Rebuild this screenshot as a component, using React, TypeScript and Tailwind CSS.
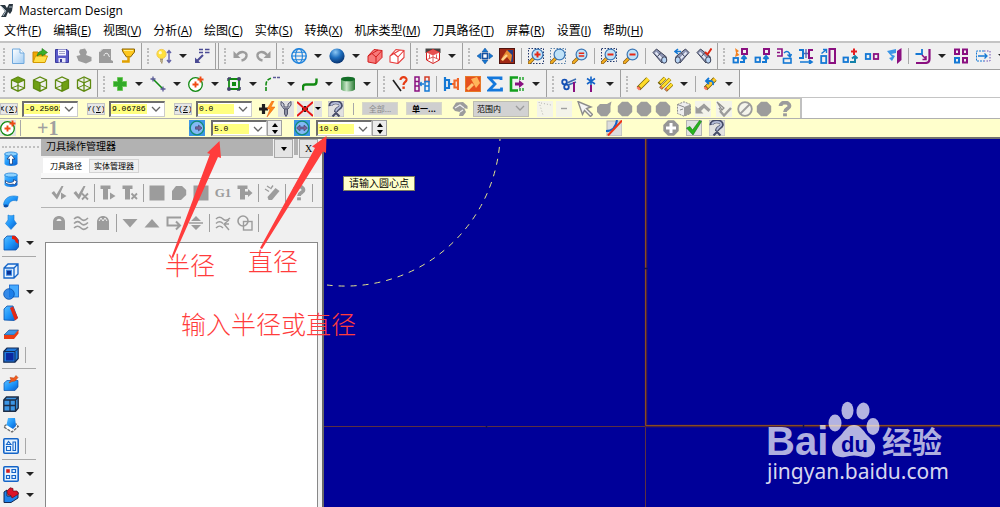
import { useState } from "react";
import type { ReactNode } from "react";

const BLUE = "#1478d4";
const PURPLE = "#8a1080";
const GRAY = "#9c9c9c";
const GREEN = "#128a12";

const lens = (
  <>
    <path d="M6 10 L1.5 14.5" stroke="#8a5a10" strokeWidth="3.4" strokeLinecap="round" />
    <path d="M6 10 L1.5 14.5" stroke="#f5b020" strokeWidth="2" strokeLinecap="round" />
    <circle cx="9.5" cy="6.5" r="5.4" fill="#bfe2f8" stroke="#3b76b4" strokeWidth="1.2" />
  </>
);

const torch = (
  <>
    <path d="M1 4.5 L4.5 1 L14.5 9 L10 15 Z" fill="#8e96b4" stroke="#3a3f55" />
    <path d="M3.5 4.5 L10.5 11.5" stroke="#e6eaf6" strokeWidth="2" />
    <path d="M5.5 8.5 L8.5 5" stroke="#3a3f55" />
    <ellipse cx="12.2" cy="12" rx="2.6" ry="3.2" fill="#b9d6f6" stroke="#3a3f55" />
  </>
);

const box = (
  <path d="M1.5 4 L8 1 L14.5 4 V12 L8 15.2 L1.5 12 Z M1.5 4 L8 6.8 L14.5 4 M8 6.8 V15" fill="none" stroke="#5f8a10" strokeWidth="1.3" />
);

const icons: Record<string, ReactNode> = {
  newFile: (
    <>
      <path d="M2.5 1 H10 L14 5 V15.5 H2.5 Z" fill="url(#page)" stroke="#6fa8dc" />
      <path d="M10 1 V5 H14" fill="#fff" stroke="#6fa8dc" />
    </>
  ),
  open: (
    <>
      <path d="M1 4 H6 L7 6 H13 V14 H1 Z" fill="#f0a800" stroke="#c98400" />
      <path d="M3.5 8 H15.5 L13 14.5 H1 Z" fill="#ffe04a" stroke="#d49a00" />
      <path d="M5 8 C6 4 8 3 10 3 V0.5 L15.5 4.5 L10 8 V6 C8 6 7 7 5 8Z" fill="#3ab02a" stroke="#1c7a18" strokeWidth=".6" />
    </>
  ),
  save: (
    <>
      <path d="M1.5 1.5 H13 L14.5 3 V14.5 H1.5 Z" fill="#5a5ac8" stroke="#3a3a9c" />
      <rect x="4" y="1.5" width="8" height="6" fill="#f4f4ff" />
      <path d="M5 3.5 H11 M5 5.5 H11" stroke="#a0a0c8" />
      <rect x="4.5" y="10" width="7" height="4.5" fill="#e8e8f8" />
      <rect x="6" y="11" width="2" height="3" fill="#3a3a9c" />
    </>
  ),
  printGray: (
    <path d="M4 1.5 L9 0.5 L11 4 L10 7 L15.5 9 V13 L10 15.5 L2.5 13 L0.5 8 L4.5 7 L3 4 Z" fill={GRAY} />
  ),
  docGray: (
    <>
      <path d="M4 1 H13 V12 L15 13 V15 H1 V4 Z" fill={GRAY} />
      <path d="M6 8 C6 4.5 10 4.5 10.5 7 L11.5 9" fill="none" stroke="#eee" />
      <path d="M1.5 4 L4.5 1" stroke="#f0f0f0" />
    </>
  ),
  funnel: (
    <>
      <path d="M2 1 H14.5 V4 L10.5 9 H6.5 L3 4 Z" fill="#ffc81e" stroke="#8a6200" />
      <path d="M4 2.5 H13" stroke="#fff08a" />
      <path d="M8.5 9 V13.5 H2" fill="none" stroke="#e0a000" strokeWidth="2.5" />
    </>
  ),
  bulb: (
    <>
      <circle cx="5.5" cy="6" r="4.6" fill="#ffe13c" stroke="#f0c850" />
      <circle cx="4.3" cy="4.7" r="1.6" fill="#fffad0" />
      <path d="M4 11.4 H7 M4 13 H7 M5 14.8 H6.5" stroke="#a8966e" strokeWidth="1.4" />
      <path d="M13 3 V14 M11 5 L13 2.5 L15 5 M11 12 L13 14.5 L15 12" fill="none" stroke="#6464a8" strokeWidth="1.4" />
    </>
  ),
  attribs: (
    <>
      <path d="M5 1.5 H9 M11 1.5 H15.5 M5 4.5 H9 M11 4.5 H15.5" stroke="#4a4a94" strokeWidth="1.6" />
      <path d="M9 7 L3 13" stroke="#4a4a94" strokeWidth="2" />
      <path d="M1 9.5 V15 H6.5 Z" fill="#4a4a94" />
    </>
  ),
  undo: (
    <>
      <path d="M4 7 C8 2 14 4 13.5 8 C13 11 11 12 8.5 12.5" fill="none" stroke={GRAY} strokeWidth="2.4" />
      <path d="M0.5 3 V10 H7.5 Z" fill={GRAY} />
    </>
  ),
  redo: (
    <>
      <path d="M12 7 C8 2 2 4 2.5 8 C3 11 5 12 7.5 12.5" fill="none" stroke={GRAY} strokeWidth="2.4" />
      <path d="M15.5 3 V10 H8.5 Z" fill={GRAY} />
    </>
  ),
  globe: (
    <g fill="none" stroke="#1e82dc" strokeWidth="1.1">
      <circle cx="8" cy="8" r="7.2" strokeWidth="1.5" />
      <ellipse cx="8" cy="8" rx="3.4" ry="7.2" />
      <path d="M0.8 8 H15.2 M2 4.3 H14 M2 11.7 H14" />
    </g>
  ),
  sphere: <circle cx="8" cy="8" r="7.6" fill="url(#ball)" />,
  cubeRed: (
    <>
      <path d="M1 8 L7 1.5 L15 2.5 V9.5 L9 15.5 L1 14 Z" fill="#f77a7a" stroke="#d21e1e" />
      <path d="M1 8 L5 5.5 L9 9 V15.5 M9 9 L15 2.5 M5 5.5 L11 2" fill="none" stroke="#d21e1e" />
    </>
  ),
  cubeWire: (
    <path d="M1 8 L7 1.5 L15 2.5 V9.5 L9 15.5 L1 14 Z M1 8 L5 5.5 L9 9 V15.5 M9 9 L15 2.5 M5 5.5 L11 2" fill="#fff" stroke="#e63c3c" strokeWidth="1.1" />
  ),
  cubeView: (
    <>
      <path d="M0.5 0.5 H15.5 V5 H0.5 Z" fill="#444" />
      <path d="M1.5 4.5 L8 1.5 L14.5 4.5 V12 L8 15.5 L1.5 12 Z" fill="#fff" stroke="#d21e1e" />
      <path d="M1.5 4.5 L8 1.5 L14.5 4.5 L8 7.5 Z" fill="#e65050" />
      <path d="M8 7.5 V15 M4.5 6.5 V10 M11.5 6.5 V10 M2 11.5 L8 9 L14 11.5" fill="none" stroke="#e05a5a" />
    </>
  ),
  fit: (
    <>
      <rect x="5.5" y="5.5" width="5" height="5" fill="#fff" stroke="#1450a0" strokeWidth="1.6" />
      <path d="M8 0 L11 4 H5 Z M8 16 L11 12 H5 Z M0 8 L4 5 V11 Z M16 8 L12 5 V11 Z" fill="#1478d4" stroke="#104a90" strokeWidth=".5" />
    </>
  ),
  repaint: (
    <>
      <rect x="0.5" y="0.5" width="15" height="15" fill="#a02814" stroke="#501410" />
      <path d="M8 2 H14 V14 H12 Z" fill="#283c82" />
      <path d="M4 8 L8 2 L13 7 L12 14 L8 9 L4 13 L2 12 Z" fill="#e88a32" />
      <path d="M3 12 L8 7" stroke="#ffd28c" strokeWidth="2.4" />
    </>
  ),
  zoomWindow: (
    <>
      <rect x="0.5" y="0.5" width="15" height="15" fill="none" stroke="#20366c" strokeDasharray="1.5 1.5" />
      {lens}
      <path d="M9.5 3.5 V9.5 M6.5 6.5 H12.5" stroke="#e62814" strokeWidth="2" />
    </>
  ),
  zoomTarget: (
    <>
      <rect x="0.5" y="0.5" width="15" height="15" fill="none" stroke="#5a82aa" strokeDasharray="1.5 1.5" />
      {lens}
    </>
  ),
  unzoomPrev: (
    <>
      {lens}
      <path d="M6.8 5.3 H12.2 M6.8 8 H12.2" stroke="#e62814" strokeWidth="1.6" />
    </>
  ),
  unzoomHalf: (
    <>
      <rect x="0.5" y="0.5" width="15" height="13" fill="none" stroke="#20366c" strokeDasharray="1.5 1.5" />
      {lens}
      <path d="M6.5 6.5 H12.5" stroke="#e62814" strokeWidth="2" />
    </>
  ),
  unzoom: (
    <>
      {lens}
      <path d="M6.5 6.5 H12.5" stroke="#e62814" strokeWidth="2" />
    </>
  ),
  torch,
  torchRotate: (
    <>
      <g transform="matrix(-1 0 0 1 16 0)">{torch}</g>
      <path d="M1 3.5 H7 M4 1 L1 3.5 L4 6" fill="none" stroke={BLUE} strokeWidth="1.6" />
    </>
  ),
  torchCheck: (
    <>
      {torch}
      <path d="M9 4 L11.5 6.5 L15.5 0.5" fill="none" stroke="#dc2814" strokeWidth="2" />
    </>
  ),
  xfDynamic: (
    <>
      <rect x="10" y="1" width="5" height="5" fill="none" stroke={PURPLE} strokeWidth="2" />
      <rect x="1.5" y="10" width="4.5" height="4.5" fill="none" stroke={BLUE} strokeWidth="1.8" />
      <path d="M3 0 L7 3 L5 4.5 L7.5 7 L3 9 L4 5 Z" fill="#f58220" />
      <path d="M8 14 H12 V10 M9.5 11 L12 8 L14.5 11" fill="none" stroke={BLUE} strokeWidth="2" />
    </>
  ),
  xfTranslate: (
    <>
      <rect x="10" y="1" width="5" height="5" fill="none" stroke={PURPLE} strokeWidth="2" />
      <rect x="1.5" y="9.5" width="4.5" height="4.5" fill="none" stroke={BLUE} strokeWidth="1.8" />
      <path d="M8 14 H12 V10 M9.5 11 L12 8 L14.5 11" fill="none" stroke={BLUE} strokeWidth="2" />
    </>
  ),
  xf3d: (
    <>
      <path d="M1 1 H6 V8 H1 M1 4.5 H4" fill="none" stroke={PURPLE} strokeWidth="1.6" />
      <rect x="7.5" y="10.5" width="7.5" height="4.5" fill="none" stroke={BLUE} strokeWidth="1.6" />
      <path d="M8 5 C11 2 14 4 14 8 M11.5 6.5 L14 9 L15.5 6" fill="none" stroke={BLUE} strokeWidth="1.5" />
    </>
  ),
  xfMirror: (
    <>
      <path d="M1 2 H5 V10 H1" fill="none" stroke={BLUE} strokeWidth="2" />
      <path d="M15 2 H11 V10 H15" fill="none" stroke={PURPLE} strokeWidth="2" />
      <path d="M8 1 V10 M6 5.5 H10" stroke="#5064b4" strokeWidth="1.3" />
      <path d="M2 14 H13 M11 12 L14 14 L11 16" fill="none" stroke={BLUE} strokeWidth="1.6" />
    </>
  ),
  xfScale: (
    <>
      <rect x="1.2" y="8" width="5" height="7" fill="none" stroke={BLUE} strokeWidth="1.8" />
      <rect x="9.5" y="1" width="5.5" height="14" fill="none" stroke={PURPLE} strokeWidth="2" />
      <path d="M1.5 5.5 L6.5 1.5 M3 1.5 H6.5 V5" fill="none" stroke={BLUE} strokeWidth="1.4" />
    </>
  ),
  xfMove: (
    <>
      <path d="M12 0.5 V7 M9 3.5 H15" stroke="#e61e1e" strokeWidth="2" />
      <rect x="1.5" y="9.5" width="4.5" height="4.5" fill="none" stroke={BLUE} strokeWidth="1.8" />
      <path d="M8 14 H13 V8 M10 10.5 L13 8 L15.5 10.5" fill="none" stroke="#1482aa" strokeWidth="2" />
    </>
  ),
  xfArrange: (
    <>
      <rect x="1.8" y="6" width="4.4" height="5" fill="none" stroke={BLUE} strokeWidth="1.8" />
      <rect x="9.8" y="6" width="4.4" height="5" fill="none" stroke={PURPLE} strokeWidth="1.8" />
    </>
  ),
  xfRoll: (
    <>
      <path d="M11 3 L15.5 0 V12 L11 16 Z" fill={PURPLE} />
      <path d="M1 3 L10 1 V5 L5 6 L9 8 L6 13 L3 10 L6 9 Z" fill="#3c96e6" />
    </>
  ),
  xfOffset: (
    <>
      <path d="M14.5 1 V11 C14.5 14 13 15 10 15 H1" fill="none" stroke={PURPLE} strokeWidth="2.2" />
      <path d="M0.5 6 H7 V1" fill="none" stroke={BLUE} strokeWidth="1.8" />
      <path d="M7 7 L11 11 M11 8 V11.5 H7.5" fill="none" stroke={PURPLE} strokeWidth="1.5" />
    </>
  ),
  xfArray: (
    <g fill="none" strokeWidth="2">
      <rect x="2" y="1.5" width="4" height="4.5" stroke={PURPLE} />
      <rect x="10" y="1.5" width="4" height="4.5" stroke={PURPLE} />
      <rect x="2" y="10" width="4" height="4.5" stroke={BLUE} />
      <rect x="10" y="10" width="4" height="4.5" stroke={PURPLE} />
    </g>
  ),
  xfStretch: (
    <>
      <path d="M9 3 H1.5 V13 H9" fill="none" stroke={BLUE} strokeDasharray="2 1" />
      <path d="M9 3 H15 V13 H9" fill="none" stroke="#6e50b4" strokeDasharray="1.5 1.5" />
      <path d="M3 8 H12 M9.5 5.5 L12 8 L9.5 10.5" fill="none" stroke={BLUE} strokeWidth="1.3" />
    </>
  ),
  cubeTop: (
    <>
      <path d="M1.5 4 L8 1 L14.5 4 L8 6.8 Z" fill="#6fa014" />
      {box}
      <path d="M1.5 12 L8 9.5 L14.5 12" fill="none" stroke="#5f8a10" />
    </>
  ),
  cubeLeft: (
    <>
      <path d="M1.5 4 L8 6.8 V15.2 L1.5 12 Z" fill="#6fa014" />
      {box}
      <path d="M8 9.5 L14.5 12" fill="none" stroke="#5f8a10" />
    </>
  ),
  cubeRight: (
    <>
      <path d="M8 6.8 L14.5 4 V12 L8 15.2 Z" fill="#6fa014" />
      {box}
      <path d="M1.5 12 L8 9.5" fill="none" stroke="#5f8a10" />
    </>
  ),
  cubeIso: (
    <>
      {box}
      <path d="M1.5 12 L8 9 L14.5 12 M8 1.5 V9" fill="none" stroke="#5f8a10" />
    </>
  ),
  plus: (
    <path d="M5.5 1.5 H10.5 V5.5 H14.5 V10.5 H10.5 V14.5 H5.5 V10.5 H1.5 V5.5 H5.5 Z" fill="#32aa28" stroke="#6ec85a" />
  ),
  line: (
    <>
      <path d="M3 3 L13 13" stroke={GREEN} strokeWidth="1.6" />
      <path d="M3 0.5 V5.5 M0.5 3 H5.5 M13 10.5 V15.5 M10.5 13 H15.5" stroke="#5a5a96" strokeWidth="1.3" />
    </>
  ),
  circle: (
    <>
      <circle cx="7.5" cy="8.5" r="6.8" fill="#fff" stroke={GREEN} strokeWidth="1.3" />
      <path d="M7.5 5.5 V11.5 M4.5 8.5 H10.5 M12.5 0.5 V6.5 M9.5 3.5 H15.5" stroke="#f04a14" strokeWidth="1.9" />
    </>
  ),
  rect: (
    <>
      <path d="M3 3 H13 V13 H3 Z" fill="none" stroke={GREEN} strokeWidth="1.8" />
      <circle cx="13" cy="3" r="2" fill="#44446c" />
      <circle cx="3" cy="13" r="2" fill="#44446c" />
      <path d="M2 2 H5 M2 2 V5 M14 14 H11 M14 14 V11" stroke="#44446c" strokeWidth="1.5" />
      <rect x="6" y="6" width="4" height="4" fill={GREEN} />
    </>
  ),
  fillet: (
    <>
      <path d="M2 15 V9 C2 5 4 3 8 2" fill="none" stroke={GREEN} strokeWidth="1.6" strokeDasharray="4 1.5" />
      <path d="M9 1.5 H16" stroke="#5a5a96" strokeWidth="1.6" strokeDasharray="3 1" />
    </>
  ),
  spline: (
    <path d="M1 14.5 V11 C1 9 2 8.5 4 8.5 H12 C14 8.5 14.5 7.5 14.5 5.5 V2.5" fill="none" stroke={GREEN} strokeWidth="2.4" />
  ),
  cylinder: (
    <>
      <path d="M1 3 V13.5 C3 16 13 16 15 13.5 V3 Z" fill="url(#can)" />
      <ellipse cx="8" cy="3" rx="7" ry="2.3" fill="#146e28" />
    </>
  ),
  analyze: (
    <>
      <path d="M1 4 L9 15" stroke="#1e1e1e" strokeWidth="1.6" />
      <path d="M8.5 4 C8.5 0 15 0.5 14.5 4 C14 6.5 11.5 6 11.5 9" fill="none" stroke="#e63c14" strokeWidth="2.2" />
      <rect x="10.4" y="10.5" width="2.4" height="2.4" fill="#e63c14" />
    </>
  ),
  match: (
    <>
      <path d="M1 1 H5 V5.5 H1 Z M1 5.5 H5 V10 H1 Z M1 10 H5 V15 H1 Z" fill="none" stroke={PURPLE} strokeWidth="1.5" />
      <path d="M11 1 H15 V5.5 H11 Z" fill="none" stroke="#d23c28" strokeWidth="1.5" />
      <path d="M11 5.5 H15 V10 H11 Z M11 10 H15 V15 H11 Z" fill="none" stroke={BLUE} strokeWidth="1.5" />
      <path d="M6 8 H10 M7.5 6 L6 8 L7.5 10" fill="none" stroke={BLUE} strokeWidth="1.3" />
    </>
  ),
  joinEnt: (
    <>
      <path d="M2 1 V15 M2 4 H6 V12 H2 M6 8 H9" fill="none" stroke={BLUE} strokeWidth="2.2" />
      <path d="M15 2 V14 M15 4.5 H11.5 V11.5 H15 M9 8 H11" fill="none" stroke="#f06428" strokeWidth="2.2" />
    </>
  ),
  hammer: (
    <>
      <rect x="0.5" y="0.5" width="15" height="15" fill="#e6501e" stroke="#e67828" />
      <path d="M6 3 L12 1 L15 7 L11 12 Z" fill="#ffb45a" />
      <path d="M2.5 13.5 L8 8" stroke="#ffc878" strokeWidth="3" />
    </>
  ),
  sigma: (
    <path d="M14 4 V1.8 H2 L8 8 L2 14.2 H14.5 V11.5" fill="none" stroke="#1478dc" strokeWidth="2.8" />
  ),
  bracket: (
    <>
      <path d="M9 1.5 H2 V14.5 H9" fill="none" stroke="#14a01e" strokeWidth="2.6" />
      <path d="M11 1 V4 M14 1 V4 M11 12 V15 M14 12 V15" stroke="#14a01e" strokeWidth="1.4" />
      <path d="M6 6.5 H10 V4 L15 8 L10 12 V9.5 H6 Z" fill={PURPLE} />
    </>
  ),
  scissors: (
    <>
      <circle cx="3.5" cy="6" r="2.3" fill="none" stroke="#1450b4" strokeWidth="1.8" />
      <circle cx="5.5" cy="11" r="2.3" fill="none" stroke="#1450b4" strokeWidth="1.8" />
      <path d="M6 7 L15 3 M7 9 L15 6" stroke="#3c6eb4" strokeWidth="1.6" />
      <path d="M13 6 V16" stroke={PURPLE} strokeWidth="2" />
    </>
  ),
  breakPt: (
    <>
      <path d="M8 0.5 V9 M4 2.5 L12 8 M12 2.5 L4 8" stroke="#1464c8" strokeWidth="1.6" />
      <path d="M8 9 V16" stroke={PURPLE} strokeWidth="2" />
    </>
  ),
  eraser: (
    <>
      <path d="M13 3 L3.5 12.5" stroke="#6e5a00" strokeWidth="5" />
      <path d="M13.2 2.8 L5 11" stroke="#ffdc28" strokeWidth="3.6" />
      <path d="M4.5 11.5 L2.8 13.2" stroke="#ff7864" strokeWidth="3.6" />
    </>
  ),
  erasers: (
    <>
      <path d="M8 2 L2 8 M13 3 L3.5 12.5 M15 8 L8.5 14.5" stroke="#6e5a00" strokeWidth="3.8" />
      <path d="M8 2 L3 7 M13 3 L5 11 M15 8 L10 13" stroke="#ffdc28" strokeWidth="2.6" />
      <path d="M5 11 L3.8 12.2 M10 13 L8.8 14.2" stroke="#ff7864" strokeWidth="2.6" />
    </>
  ),
  undelete: (
    <>
      <path d="M13 3 L3.5 12.5" stroke="#6e5a00" strokeWidth="4.6" />
      <path d="M13.2 2.8 L5 11" stroke="#ffc828" strokeWidth="3.2" />
      <path d="M4.5 11.5 L2.8 13.2" stroke="#ff7864" strokeWidth="3.2" />
      <path d="M4.5 5 H9 C11 5 11.5 7 11 9 M7 2 L4 5 L7 8" fill="none" stroke={BLUE} strokeWidth="1.8" />
    </>
  ),
  fastPoint: (
    <>
      <path d="M4.5 3 V13 M0 8 H9" stroke="#1e1e1e" strokeWidth="3.2" />
      <path d="M13 0 L8 8 H11 L8 16 L16 6 H12 L15 0 Z" fill="#ff8c14" stroke="#e65014" strokeWidth=".5" />
    </>
  ),
  caliper: (
    <>
      <rect width="16" height="16" fill="#e1e1e1" />
      <path d="M3 0.5 V4 L6 8 H10 L13 4 V0.5 L10 3 V6 H6 V3 Z" fill="#c8ccd8" stroke="#50546a" />
      <path d="M6.5 8 H9.5 V13 L8 15.5 L6.5 13 Z" fill="#8c90a4" stroke="#50546a" />
    </>
  ),
  clearPt: (
    <>
      <rect width="16" height="16" fill="#e8e8e8" />
      <path d="M8 5 V11 M5 8 H11" stroke="#1e1e1e" strokeWidth="2" />
      <path d="M0 1 L16 15 M16 1 L0 15" stroke="#e61414" strokeWidth="2" />
    </>
  ),
  help: (
    <>
      <rect width="16" height="16" fill="#e1e1e1" stroke="#bbb" />
      <path d="M2.5 5 C2 0 13.5 0 12.8 5 C12 8 8 7 8 11" fill="none" stroke="#464c68" strokeWidth="4" />
      <path d="M3 4.5 C4 1 12.2 1 12.2 5 C11.5 7.5 8 7 8 10.5" fill="none" stroke="#b4bcd8" strokeWidth="1.8" />
      <path d="M4.5 15.5 L8 12 L11.5 15.5" fill="none" stroke="#464c68" strokeWidth="2" />
    </>
  ),
  helpGray: (
    <>
      <path d="M3.5 5 C3.5 0.5 12.5 0.5 12.5 5 C12.5 8 8 7.5 8 11" fill="none" stroke={GRAY} strokeWidth="3.8" />
      <rect x="6.1" y="12.3" width="3.8" height="3" fill={GRAY} />
    </>
  ),
  turnGray: (
    <>
      <path d="M0.5 7 L4 1.5 L11 1 L15.5 5 V8 L12 7 L14 11 L11 15 L7 15 L8 11 L3 10 Z" fill={GRAY} />
      <path d="M3 7 L8 4 L12 7 M8 11 L11 9" fill="none" stroke="#eee" strokeWidth="1.2" />
    </>
  ),
  dots: (
    <>
      <rect width="16" height="16" fill="#f3f3ea" />
      <path d="M2 1 L6 14 M4 2 L14 4" stroke="#b4b4b0" strokeDasharray="1 2" />
    </>
  ),
  minus: (
    <>
      <rect width="16" height="16" fill="#f3f3ea" />
      <path d="M5 7.5 H11" stroke="#a0a0a0" strokeWidth="1.4" />
    </>
  ),
  pointer: (
    <path d="M1 0.5 L14 6 L9.5 7.5 L15.5 13.5 L13.5 15.5 L7.5 9.5 L5.5 13.5 Z" fill="#f4f4f4" stroke="#8c8c8c" strokeWidth="1.4" />
  ),
  solidEdge: <path d="M4 3 H11 L15.5 0.5 L14.5 5 V11 L11 15.2 H5 L1 11 V6 Z" fill={GRAY} />,
  octagon: <path d="M5 0.8 H11 L15.2 5 V11 L11 15.2 H5 L0.8 11 V5 Z" fill={GRAY} />,
  cubeGray: (
    <>
      <path d="M1.5 3.5 L8 0.8 L14.5 3.5 V12.5 L8 15.2 L1.5 12.5 Z" fill="#eee" stroke="#8c8c8c" strokeDasharray="2 1" />
      <path d="M8 6 L14.5 3.5 V12.5 L8 15.2 Z" fill={GRAY} />
      <path d="M1.5 3.5 L8 6 M4 9 L7 8" stroke="#8c8c8c" />
    </>
  ),
  backGray: (
    <>
      <rect width="16" height="16" fill="#f3f3ea" />
      <path d="M0.5 5 L3 7.5 L9 2.5 L15.5 8.5 L13.5 11 L9 7 L6 10 L8.5 12.5 H0.5 Z" fill={GRAY} />
    </>
  ),
  pickGray: (
    <>
      <rect width="16" height="16" fill="#f3f3ea" />
      <path d="M1 1 L8 7 L6 9 Z M3 7 L6 12" fill="#ddd" stroke="#8c8c8c" strokeWidth="1.2" />
      <path d="M4 10 L8 14.5 L15 7" fill="none" stroke={GRAY} strokeWidth="2.4" />
    </>
  ),
  noGray: (
    <>
      <circle cx="8" cy="8" r="6.8" fill="#f4f4ec" stroke={GRAY} strokeWidth="1.8" />
      <path d="M3.5 12.5 L12.5 3.5" stroke={GRAY} strokeWidth="1.8" />
    </>
  ),
  radius: (
    <>
      <rect width="16" height="16" fill="#3c96e6" />
      <circle cx="8" cy="8" r="6.8" fill="#82b9f5" stroke="#148c78" strokeWidth="1.3" />
      <path d="M6.5 6.8 H9.5 V5 L13 8 L9.5 11 V9.2 H6.5 Z" fill="#786496" stroke="#3c3c6e" strokeWidth=".6" />
    </>
  ),
  diameter: (
    <>
      <rect width="16" height="16" fill="#3c96e6" />
      <circle cx="8" cy="8" r="6.8" fill="#82b9f5" stroke="#148c78" strokeWidth="1.3" />
      <path d="M2.5 8 L6 5 V7 H10 V5 L13.5 8 L10 11 V9 H6 V11 Z" fill="#786496" stroke="#3c3c6e" strokeWidth=".6" />
    </>
  ),
  tangent: (
    <>
      <rect x="1" y="1" width="15" height="15" fill="#dcdcdc" stroke="#b4b4b4" />
      <path d="M0 11 C6 11 10 7 11 0" fill="none" stroke="#1464c8" strokeWidth="2" />
      <path d="M2 15.5 L16 0.5" stroke="#f03214" strokeWidth="2" />
    </>
  ),
  applyGray: (
    <>
      <path d="M5 0.3 H11 L15.7 5 V11 L11 15.7 H5 L0.3 11 V5 Z" fill="#969696" />
      <path d="M8 3 V13 M3 8 H13" stroke="#fff" strokeWidth="3" />
    </>
  ),
  ok: (
    <>
      <rect x="0.5" y="0.5" width="15" height="15" fill="#e1e1e1" stroke="#b4b4b4" />
      <path d="M0.5 8 L4 6.5 L6.5 10 L13.5 0.5 L15.5 1.5 L7 15 Z" fill="#28b41e" stroke="#147814" strokeWidth=".6" />
    </>
  ),
  extrude: (
    <>
      <path d="M1.5 3 V13 C3 15.5 13 15.5 14.5 13 V3 Z" fill="url(#solid)" />
      <ellipse cx="8" cy="3" rx="6.5" ry="2" fill="#8cd2ff" stroke="#1478d2" strokeWidth=".7" />
      <path d="M8 3.5 L12 8 H9.5 V13 H6.5 V8 H4 Z" fill="#fff" stroke="#1e3c78" strokeWidth=".8" />
    </>
  ),
  revolve: (
    <>
      <path d="M1.5 3 V13 C3 15.5 13 15.5 14.5 13 V3 Z" fill="url(#solid)" />
      <ellipse cx="8" cy="3" rx="6.5" ry="2" fill="#8cd2ff" stroke="#1478d2" strokeWidth=".7" />
      <path d="M2.5 8.5 C5 11 8 11 10.5 9.5 V7.5 L14 9.5 L11.5 13 L10.5 12 C7 13 4 12 2.5 11 Z" fill="#fff" stroke="#1e3c78" strokeWidth=".8" />
    </>
  ),
  sweep: (
    <>
      <path d="M0.5 12 C1 5 7 1.5 15 3.5 L14 8 C9 6.5 6 8.5 5 13.5 Z" fill="url(#solid)" stroke="#1478d2" strokeWidth=".6" />
      <ellipse cx="2.8" cy="13" rx="2.3" ry="1.4" fill="#0a50aa" />
    </>
  ),
  loft: (
    <path d="M5 1 C7 2 9 2 11 1 V6 L13.5 9.5 L8 15.5 L2.5 9.5 L5 6 Z" fill="url(#solid)" stroke="#1478d2" strokeWidth=".6" />
  ),
  solidFillet: (
    <>
      <path d="M1 4 L4 1 H12 L15.5 5 V12 L13 15 H1 Z" fill="url(#solid)" stroke="#0a50aa" strokeWidth=".8" />
      <path d="M9 1 C13 0 16 4 15.5 9 L12.5 7 C12.5 5 11 4 9 4 Z" fill="#e61e0a" />
    </>
  ),
  shell: (
    <>
      <path d="M1 5 L5 1 H15 V11 L11 15 H1 Z M1 5 H11 V15 M11 5 L15 1" fill="#e6f2ff" stroke="#1464c8" strokeWidth="1.3" />
      <rect x="3.5" y="7.2" width="5" height="5" fill="#0a3296" stroke="#3c8ce6" />
    </>
  ),
  boolean: (
    <>
      <rect x="6.5" y="1" width="9" height="12" fill="#46aaff" stroke="#1464c8" strokeWidth=".8" />
      <circle cx="6" cy="10" r="5.3" fill="#1478e6" fillOpacity=".85" stroke="#0a50aa" strokeWidth=".8" />
    </>
  ),
  draft: (
    <>
      <path d="M1 15 V4 L4 1 H10 L14.5 13 L11 15.5 Z" fill="url(#solid)" stroke="#0a50aa" strokeWidth=".8" />
      <path d="M7 3 L10 1.5 L15 13 L12 15.5 Z" fill="#e62814" />
    </>
  ),
  thicken: (
    <>
      <path d="M1 9 L6 4 H15.5 L11 9 Z" fill="#3c96e6" stroke="#143c78" strokeWidth=".6" />
      <path d="M1 9 H11 L15.5 4 V7.5 L11 13 H1 Z" fill="#eb3c14" />
    </>
  ),
  trimSolid: (
    <>
      <path d="M0.8 4.5 L4 1 H15.2 V11.5 L12 15.2 H0.8 Z" fill="#1e78dc" stroke="#142850" strokeWidth="1.2" />
      <rect x="3" y="6" width="7.5" height="7.5" fill="#0a28a0" />
      <path d="M12 15 V4.5 L15 1.5 M12 4.5 H1" fill="none" stroke="#142850" />
    </>
  ),
  pushPull: (
    <>
      <path d="M1 8 L4 5.5 H15 V12 L12 15.5 H1 Z" fill="url(#solid)" stroke="#0a50aa" strokeWidth=".7" />
      <path d="M6 8 L8 5 L7 2.5 L11 3 L13 0.5 L15 2.5 L12 6 L9 6.5 Z" fill="#f05a1e" stroke="#b43c0a" strokeWidth=".5" />
    </>
  ),
  window: (
    <>
      <path d="M0.8 4 L3.5 1 H15.2 V12 L12.5 15.2 H0.8 Z" fill="#3c96e6" stroke="#1e2d46" strokeWidth="1.4" />
      <path d="M1 9.5 H12.5 M7 4 V15 M12.5 15 V4 L15 1.5 M12.5 4 H1" fill="none" stroke="#1e2d46" strokeWidth="1.3" />
    </>
  ),
  shaft: (
    <>
      <path d="M3.5 7.5 L0.8 10 L9 15 L15.2 9.5 L12.5 6.5" fill="#fff" stroke="#6e6e6e" strokeWidth="1.4" strokeDasharray="3 1" />
      <path d="M5 1 H12 L13 9 L10 12 L3.5 8 Z" fill="url(#solid)" />
    </>
  ),
  layout: (
    <>
      <rect x="0.8" y="0.8" width="14.4" height="14.4" rx="1" fill="#e6f4ff" stroke="#1464c8" strokeWidth="1.6" />
      <path d="M3.5 12.5 V8.5 H7.5 V12.5 Z M3.5 6.5 L5.5 3.5 L8 6.5 Z M10 4 H12.5 V12.5 H10 Z" fill="none" stroke="#1464c8" strokeWidth="1.1" />
    </>
  ),
  pattern: (
    <>
      <rect x="0.8" y="0.8" width="14.4" height="14.4" rx="1" fill="#e6f4ff" stroke="#1464c8" strokeWidth="1.6" />
      <path d="M9 3.5 H12.5 V6.5 H9 Z M3.5 9.5 H6.5 V12.5 H3.5 Z M9 9.5 H12.5 V12.5 H9 Z" fill="none" stroke="#1464c8" strokeWidth="1.2" />
      <rect x="3.2" y="3.2" width="3.6" height="3.6" fill="#d21e1e" />
    </>
  ),
  feature: (
    <>
      <path d="M1 5 L4 3 V9 H8 V8 L15 5 V11 L8 15.5 H1 Z" fill="#1e82eb" stroke="#142850" />
      <path d="M4 4 L7 0.8 L10 1.5 L10 4 L14 4 L15.5 7 L9 11 L8 8.5 L5 8 Z" fill="#dc1428" stroke="#6e0a14" strokeWidth=".7" />
    </>
  ),
  opCheck: <path d="M0.5 8 L3 6 L5.5 9.5 L10.5 1 H12.5 L8 11 L6 14.5 Z M10 7.5 L15.5 11 L10 14.5 Z" fill={GRAY} />,
  opUncheck: (
    <>
      <path d="M0.5 8 L3 6 L5.5 9.5 L10.5 1 H12.5 L8 11 L6 14.5 Z" fill={GRAY} />
      <path d="M9 8.5 L15 14.5 M15 8.5 L9 14.5" stroke={GRAY} strokeWidth="1.8" />
    </>
  ),
  toolPlay: <path d="M0.5 0.5 H10.5 V4 H8 V14.5 H3 V4 H0.5 Z M10 7.5 L15.5 11 L10 14.5 Z" fill={GRAY} />,
  toolX: (
    <>
      <path d="M0.5 0.5 H10.5 V4 H8 V14.5 H3 V4 H0.5 Z" fill={GRAY} />
      <path d="M9.5 8.5 L15 14 M15 8.5 L9.5 14" stroke={GRAY} strokeWidth="1.8" />
    </>
  ),
  square: <rect x="0.5" y="0.5" width="15" height="15" fill={GRAY} />,
  solidGray: <path d="M5 1 H11 L15.2 5 V10 L10 15 H1 V6 Z" fill={GRAY} />,
  toolNext: <path d="M0.5 0.5 H10.5 V4 H8 V6.5 H11 V4 L15.5 8 L11 12 V10 H8 V14.5 H3 V4 H0.5 Z" fill={GRAY} />,
  knife: (
    <>
      <path d="M3.5 12 L11.5 3 L15.5 6 L8 15 L4.5 15 Z" fill={GRAY} />
      <path d="M1 4 L5 6.5 M3 1 L6 3 M9 0.5 L6.5 4" stroke={GRAY} strokeWidth="1.3" />
    </>
  ),
  lock: (
    <>
      <path d="M2 15 V7 C2 -1 14 -1 14 7 V15 Z" fill={GRAY} />
      <path d="M5.5 6 C6 3 10 3 10.5 6 Z" fill="#f0f0f0" />
    </>
  ),
  waves: (
    <path d="M1 4 C4 1 6 2 8 4 S12 6 15 3 M1 8.5 C4 5.5 6 6.5 8 8.5 S12 10.5 15 7.5 M1 13 C4 10 6 11 8 13 S12 15 15 12" fill="none" stroke={GRAY} strokeWidth="1.6" />
  ),
  post: (
    <>
      <path d="M2 15 V7 C2 -1 14 -1 14 7 V15 Z" fill={GRAY} />
      <path d="M4 6 L6 3 L8 6 L10 3 L12 6" fill="none" stroke="#f0f0f0" />
    </>
  ),
  down: <path d="M0.5 4 H15.5 L8 12.5 Z" fill={GRAY} />,
  up: <path d="M0.5 12.5 H15.5 L8 4 Z" fill={GRAY} />,
  insert: (
    <path d="M15 2.5 H1.5 V10.5 H13 M10 6.5 L14 10.5 L10 14.5" fill="none" stroke={GRAY} strokeWidth="2" />
  ),
  split: <path d="M3 6 L8 1 L13 6 Z M3 10 L8 15 L13 10 Z M1 7.3 H15 V8.7 H1 Z" fill={GRAY} />,
  wavesEdit: (
    <>
      <path d="M1 4 C4 1 6 2 8 4 S12 6 15 3 M1 8.5 C4 5.5 6 6.5 8 8.5 M1 13 C4 10 6 11 8 13" fill="none" stroke={GRAY} strokeWidth="1.5" />
      <path d="M14 5 L9 9 L14 15 M9 9 H14" fill="none" stroke={GRAY} strokeWidth="1.4" />
    </>
  ),
  overlap: (
    <>
      <circle cx="6" cy="6" r="5" fill="none" stroke={GRAY} strokeWidth="1.6" />
      <rect x="6.5" y="6.5" width="8.5" height="8.5" fill="none" stroke={GRAY} strokeWidth="1.4" />
    </>
  ),
};

function Icon({ name }: { name: string }) {
  return (
    <svg viewBox="0 0 16 16" className="h-4 w-4 shrink-0" aria-hidden="true">
      {icons[name]}
    </svg>
  );
}

// "v" is a drop-down arrow, "|" a separator, anything else an icon name
function Items({ items }: { items: string[] }) {
  return (
    <>
      {items.map((item, idx) => {
        if (item === "v") {
          return (
            <button key={idx} aria-label="更多" className="flex w-4 shrink-0 items-center justify-center self-stretch">
              <span className="border-x-4 border-t-4 border-x-transparent border-t-[#222]" />
            </button>
          );
        }
        if (item === "|") {
          return (
            <span key={idx} className="flex w-[7px] shrink-0 justify-center">
              <span className="h-4 w-px bg-[#a8a8a8]" />
            </span>
          );
        }
        return (
          <button key={idx} aria-label={item} className="flex w-[22px] shrink-0 items-center justify-center self-stretch hover:bg-[#dcebfa]">
            <Icon name={item} />
          </button>
        );
      })}
    </>
  );
}

function ToolGroup({ items, first }: { items: string[]; first?: boolean }) {
  return (
    <div className="flex shrink-0 items-center border-r border-[#a0a0a0] bg-[#f0f0f0] pr-[2px]">
      <span className={first ? "flex w-[7px] justify-center" : "flex w-[11px] justify-center"}>
        <span className="h-4 border-l-2 border-dotted border-[#bcbcbc]" />
      </span>
      <Items items={items} />
    </div>
  );
}

const topGroups = [
  ["newFile", "open", "save", "printGray", "docGray", "funnel"],
  ["bulb", "v", "attribs"],
  ["undo", "redo"],
  ["globe", "v", "sphere", "v", "cubeRed", "cubeWire"],
  ["cubeView", "v"],
  ["fit", "repaint", "|", "zoomWindow", "zoomTarget", "unzoomPrev", "|", "unzoomHalf", "unzoom", "|", "torch", "torchRotate", "torchCheck"],
  ["xfDynamic", "xfTranslate", "xf3d", "xfMirror", "xfScale", "xfMove", "xfArrange", "xfRoll", "|", "xfOffset", "v", "xfArray", "xfStretch", "v"],
];

const secondGroups = [
  ["cubeTop", "cubeLeft", "cubeRight", "cubeIso"],
  ["plus", "v", "line", "v", "circle", "v", "rect", "v", "fillet", "v", "spline", "v", "cylinder", "v"],
  ["analyze", "match", "|", "joinEnt", "hammer", "sigma", "bracket", "v"],
  ["scissors", "breakPt", "v"],
  ["eraser", "erasers", "v", "|", "undelete", "v"],
];

const menus = [
  ["文件", "F"],
  ["编辑", "E"],
  ["视图", "V"],
  ["分析", "A"],
  ["绘图", "C"],
  ["实体", "S"],
  ["转换", "X"],
  ["机床类型", "M"],
  ["刀具路径", "T"],
  ["屏幕", "R"],
  ["设置", "I"],
  ["帮助", "H"],
];

const sideGroups = [
  [["extrude"], ["revolve"], ["sweep"], ["loft"], ["solidFillet", "v"]],
  [["shell"], ["boolean", "v"], ["draft"], ["thicken"], ["trimSolid", "|"]],
  [["pushPull"], ["window"], ["shaft"], ["layout", "|"]],
  [["pattern", "v"], ["feature", "v"]],
];

function Chevron() {
  return (
    <svg viewBox="0 0 10 6" className="h-[6px] w-[10px] shrink-0" aria-hidden="true">
      <path d="M1 1 L5 5 L9 1" fill="none" stroke="#666" strokeWidth="1.3" />
    </svg>
  );
}

function Combo({ label, initial }: { label: string; initial: string }) {
  const [value, setValue] = useState(initial);
  return (
    <div className="flex h-4 w-14 shrink-0 items-center border-2 border-r border-b border-[#6e6e6e] border-r-[#ccc] border-b-[#ccc] bg-white">
      <input
        aria-label={label}
        value={value}
        onChange={(e) => setValue(e.target.value)}
        className="h-[10px] w-9 bg-[#ffff80] pl-px font-['Liberation_Mono',monospace] text-[8px] text-black outline-none"
      />
      <button aria-label={`${label} 列表`} className="flex flex-1 justify-center">
        <Chevron />
      </button>
    </div>
  );
}

function Spinner({ label }: { label: string }) {
  return (
    <div className="flex h-4 w-[15px] shrink-0 flex-col border border-[#a0a0a0] bg-[#ececec]">
      <button aria-label={`${label} 增加`} className="flex flex-1 items-center justify-center">
        <span className="border-x-[3px] border-b-[4px] border-x-transparent border-b-black" />
      </button>
      <button aria-label={`${label} 减少`} className="flex flex-1 items-center justify-center">
        <span className="border-x-[3px] border-t-[4px] border-x-transparent border-t-black" />
      </button>
    </div>
  );
}

function SmallIcons({ names }: { names: string[] }) {
  return (
    <>
      {names.map((name) => (
        <button key={name} aria-label={name} className="flex w-[19px] shrink-0 items-center justify-center">
          <Icon name={name} />
        </button>
      ))}
    </>
  );
}

function CoordinateBar() {
  const fields = [
    { axis: "X", value: "-9.25092" },
    { axis: "Y", value: "9.06786" },
    { axis: "Z", value: "0.0" },
  ];
  return (
    <div className="flex h-5 w-[802px] shrink-0 items-center border-t border-r-2 border-[#c0c0c0] bg-[#ffffcc]">
      <div className="flex gap-[9px]">
        {fields.map((f) => (
          <div key={f.axis} className="flex items-center gap-1">
            <button className="flex h-3 w-[18px] items-center justify-center overflow-hidden border border-[#c4c4c4] bg-[#e6e6e6] font-['Liberation_Mono',monospace] text-[8px]">
              {f.axis}(<u>{f.axis}</u>)
            </button>
            <Combo label={f.axis} initial={f.value} />
          </div>
        ))}
      </div>
      <div className="flex items-center pl-[5px]">
        <SmallIcons names={["fastPoint", "caliper", "clearPt"]} />
        <button aria-label="点设置" className="mr-1 flex h-4 w-2 items-center justify-center bg-[#e1e1e1]">
          <span className="border-x-[3px] border-t-[3px] border-x-transparent border-t-black" />
        </button>
        <SmallIcons names={["help"]} />
      </div>
      <span className="mx-2 h-3 w-px bg-[#a8a8a8]" />
      <div className="flex items-center gap-2 font-['Noto_Sans_CJK_SC',sans-serif] text-[8px]">
        <button className="h-[13px] w-9 border border-[#d8d8c8] bg-[#cfcfcf] leading-[11px] text-[#8a8a8a]">全部...</button>
        <button className="h-[13px] w-9 border border-[#d8d8c8] bg-[#cfcfcf] leading-[11px] font-bold text-black">单一...</button>
        <div className="flex items-center gap-1">
          <SmallIcons names={["turnGray"]} />
          <div className="relative h-4 w-14">
            <select aria-label="选择范围" className="h-4 w-14 appearance-none border border-[#bdbdb0] bg-[#d2d2d2] pl-[3px] text-[8px] leading-[14px] text-black">
              <option>范围内</option>
              <option>范围外</option>
            </select>
            <span className="pointer-events-none absolute top-1 right-1 opacity-50">
              <Chevron />
            </span>
          </div>
        </div>
      </div>
      <div className="flex flex-1 items-center justify-between pr-[5px] pl-[6px]">
        <div className="flex">
          <SmallIcons names={["dots", "minus"]} />
        </div>
        <div className="flex">
          <SmallIcons names={["pointer", "solidEdge"]} />
        </div>
        <div className="flex">
          {[1, 2, 3].map((n) => (
            <SmallIcons key={n} names={["octagon"]} />
          ))}
        </div>
        <div className="flex">
          <SmallIcons names={["cubeGray", "backGray"]} />
        </div>
        <SmallIcons names={["pickGray"]} />
        <div className="flex">
          <SmallIcons names={["noGray", "octagon"]} />
        </div>
        <SmallIcons names={["helpGray"]} />
      </div>
    </div>
  );
}

function RibbonBar() {
  return (
    <div className="flex h-[21px] items-center overflow-hidden border-t border-b-2 border-t-[#b0b0b0] border-b-[#707070] bg-[#ffffcc]">
      <div className="flex w-[187px] shrink-0 items-center">
        <button aria-label="圆心点" className="bg-[#e4e4e4]">
          <Icon name="circle" />
        </button>
        <span className="mx-1 h-4 w-px bg-[#a8a8a8]" />
        <span className="pl-3 font-['Liberation_Serif',serif] text-[20px] leading-4 font-bold text-[#a0a0a0]">+1</span>
      </div>
      <div className="flex w-[417px] shrink-0 items-center gap-[10px]">
        <div className="flex items-center gap-[5px]">
          <SmallIcons names={["radius"]} />
          <div className="flex">
            <Combo label="半径" initial="5.0" />
            <Spinner label="半径" />
          </div>
        </div>
        <div className="flex items-center gap-[5px]">
          <SmallIcons names={["diameter"]} />
          <div className="flex">
            <Combo label="直径" initial="10.0" />
            <Spinner label="直径" />
          </div>
        </div>
      </div>
      <SmallIcons names={["tangent"]} />
      <div className="flex gap-1 pl-[38px]">
        <SmallIcons names={["applyGray", "ok", "help"]} />
      </div>
    </div>
  );
}

function SideToolbar() {
  return (
    <aside className="w-[41px] shrink-0 bg-[#f0f0f0]">
      <div className="flex h-[9px] items-end px-[2px]">
        <span className="w-full border-t-2 border-dotted border-[#c0c0c0]" />
      </div>
      {sideGroups.map((group, idx) => (
        <div key={idx}>
          {idx > 0 && (
            <div className="flex h-[7px] items-center px-[2px]">
              <span className="h-px w-[34px] bg-[#a8a8a8]" />
            </div>
          )}
          {group.map((row) => (
            <div key={row[0]} className="flex h-[21px] items-center">
              <Items items={row} />
            </div>
          ))}
        </div>
      ))}
    </aside>
  );
}

function PanelSep() {
  return (
    <span className="flex w-[5px] justify-center">
      <span className="h-[18px] w-px bg-[#a0a0a0]" />
    </span>
  );
}

function OperationsPanel() {
  return (
    <section className="flex w-[283px] shrink-0 flex-col border-r-2 border-[#6a6a6a] bg-[#f0f0f0] font-['Noto_Sans_CJK_SC',sans-serif]">
      <div className="flex h-[19px] gap-px pr-1">
        <h2 className="h-[17px] flex-1 bg-[#b2b2b2] pl-[5px] text-[10px] leading-[14px] text-black">刀具操作管理器</h2>
        <button aria-label="面板菜单" className="flex h-[19px] w-[19px] items-center justify-center border border-[#a8a8a8] bg-[#e4e4e4]">
          <span className="border-x-[3px] border-t-4 border-x-transparent border-t-black" />
        </button>
        <span className="h-4 w-1 bg-[#b2b2b2]" />
        <button aria-label="关闭" className="h-[19px] w-[19px] border border-[#a8a8a8] bg-[#e4e4e4] font-['Liberation_Serif',serif] text-[10px] leading-4">
          X
        </button>
      </div>
      <div role="tablist" className="flex h-[15px] items-end pl-[2px] text-[8px]">
        <button role="tab" aria-selected="true" className="h-[15px] w-[46px] bg-white leading-[11px]">
          刀具路径
        </button>
        <button role="tab" aria-selected="false" className="h-[14px] w-[50px] border border-[#d4d4d4] leading-3">
          实体管理器
        </button>
      </div>
      <div className="h-[6px] border-b border-[#a0a0a0] bg-[#f8f8f8]" />
      <div className="flex h-[29px] items-center border-b border-[#b4b4b4] pl-[7px]">
        <Items items={["opCheck", "opUncheck"]} />
        <PanelSep />
        <Items items={["toolPlay", "toolX"]} />
        <PanelSep />
        <Items items={["square", "solidGray", "square"]} />
        <button className="w-[22px] font-['Liberation_Serif',serif] text-[13px] font-bold text-[#9c9c9c]">G1</button>
        <Items items={["toolNext"]} />
        <PanelSep />
        <Items items={["knife"]} />
        <PanelSep />
        <Items items={["helpGray"]} />
        <PanelSep />
      </div>
      <div className="flex h-[30px] items-center pl-[7px]">
        <Items items={["lock", "waves", "post"]} />
        <PanelSep />
        <Items items={["down", "up", "insert", "split"]} />
        <PanelSep />
        <Items items={["wavesEdit", "overlap"]} />
        <PanelSep />
      </div>
      <div className="mt-1 mr-1 ml-1 flex-1 border border-b-0 border-[#888] bg-white" />
    </section>
  );
}

function Watermark() {
  return (
    <svg viewBox="0 0 190 90" className="absolute top-[258px] left-[438px] h-[90px] w-[190px]" fill="#fff" fillOpacity=".7">
      <ellipse cx="73" cy="26" rx="6.5" ry="8.5" />
      <ellipse cx="85.5" cy="13.5" rx="6" ry="8.8" />
      <ellipse cx="101" cy="14" rx="6.5" ry="8.5" transform="rotate(10 101 14)" />
      <ellipse cx="111" cy="29.5" rx="6.5" ry="8.5" />
      <path d="M92 28 C98 28 101 33 105 38 C110 43 114 46 113 52 C112 59 107 61 101 60 C95 58 89 58 83 60 C76 61 70 58 70 51 C70 45 75 42 79 38 C83 33 86 28 92 28 Z" />
      <text x="4" y="58" fontSize="40" fontWeight="700" fontFamily="Liberation Sans">Bai</text>
      <text x="79" y="55" fontSize="22" fontWeight="700" fontFamily="Liberation Sans" fill="#000099" fillOpacity="1">du</text>
      <text x="120" y="56" fontSize="30" fontWeight="700" fontFamily="Noto Sans CJK SC">经验</text>
      <text x="5" y="82" fontSize="21" fontFamily="Noto Sans" fillOpacity=".85">jingyan.baidu.com</text>
    </svg>
  );
}

function Viewport() {
  return (
    <main className="relative min-w-0 flex-1 overflow-hidden bg-[#000099]">
      <svg className="absolute inset-0 h-full w-full" aria-label="绘图区">
        <path d="M0 287.5 H321 M321.5 288 V2000" stroke="#5c3040" />
        <path d="M322 0 V287 H2000" fill="none" stroke="#46204a" strokeWidth="2.4" />
        <path d="M321.5 0 V286.5 H2000" fill="none" stroke="#8a4c20" />
        <path d="M162.5 287 V289 M479.5 286 V289 M320 129.5 H324" stroke="#101050" strokeWidth="1.5" />
        <path d="M176 0 A155 155 0 0 1 3 146" fill="none" stroke="#e6e68c" strokeDasharray="6 6" strokeDashoffset="4" />
      </svg>
      <div className="absolute top-[37px] left-[19px] border border-[#808060] bg-[#ffffcc] px-[5px] pb-px font-['Noto_Sans_CJK_SC',sans-serif] text-[10px] leading-3 text-black">
        请输入圆心点
      </div>
      <Watermark />
    </main>
  );
}

function Annotations() {
  return (
    <div className="pointer-events-none absolute inset-0 overflow-hidden font-['Noto_Sans_CJK_SC',sans-serif] text-[25px] leading-[25px] font-light text-[#ff3c3c]">
      <svg className="absolute inset-0 h-full w-full" fill="#ff3c3c">
        <path d="M219.5 141 L221 158 L218 157 L173 258 L171.5 257 L210 154 L207 153 Z" />
        <path d="M326.5 136 L326 153 L323 151.5 L262 249 L260 248 L315 148 L312 146.5 Z" />
      </svg>
      <span className="absolute top-[252px] left-[165px]">半径</span>
      <span className="absolute top-[248px] left-[248px]">直径</span>
      <span className="absolute top-[311px] left-[181px]">输入半径或直径</span>
    </div>
  );
}

export default function App() {
  return (
    <div className="relative flex min-h-screen flex-col overflow-hidden bg-white text-black">
      {/* Shared gradients */}
      <svg className="absolute h-0 w-0" aria-hidden="true">
        <defs>
          <linearGradient id="page" x1="0" y1="0" x2="1" y2="1">
            <stop offset="0" stopColor="#fff" />
            <stop offset="1" stopColor="#a0ccf4" />
          </linearGradient>
          <radialGradient id="ball" cx=".4" cy=".25" r=".75">
            <stop offset="0" stopColor="#8cc8f5" />
            <stop offset=".5" stopColor="#1e6ebe" />
            <stop offset="1" stopColor="#08326e" />
          </radialGradient>
          <linearGradient id="can">
            <stop offset="0" stopColor="#50a05a" />
            <stop offset=".4" stopColor="#c8e6c8" />
            <stop offset="1" stopColor="#287832" />
          </linearGradient>
          <linearGradient id="solid" x1="0" y1="0" x2="1" y2="1">
            <stop offset="0" stopColor="#5abeff" />
            <stop offset=".5" stopColor="#1e96fa" />
            <stop offset="1" stopColor="#0a5ac8" />
          </linearGradient>
        </defs>
      </svg>

      {/* Title bar */}
      <header className="flex h-[21px] items-center gap-[5px] pt-px">
        <svg viewBox="0 0 14 14" className="h-[14px] w-[14px]" aria-hidden="true">
          <path d="M0 1 H5 L7 4 L9 0 H13 L12 7 L10 10 L8 8 L6 13 H1 L5 7 Z" fill="#2a3640" />
          <path d="M1 2 L6 7 L3 12 M9 3 H12" fill="none" stroke="#a8b8c4" />
        </svg>
        <h1 className="font-['Open_Sans',sans-serif] text-xs leading-4">Mastercam Design</h1>
      </header>

      <nav className="flex h-5 items-center gap-3 pl-1 font-['Open_Sans','Noto_Sans_CJK_SC',sans-serif] text-xs">
        {menus.map(([label, key]) => (
          <button key={key} className="shrink-0 whitespace-nowrap">
            {label}(<u>{key}</u>)
          </button>
        ))}
      </nav>

      {/* Toolbars */}
      <div className="flex h-[29px] overflow-hidden border-t-2 border-b border-[#c4c4c4] border-b-[#a0a0a0] bg-[#f0f0f0]">
        {topGroups.map((items, idx) => (
          <div key={idx} className={idx === 2 ? "ml-[2px] flex border-l border-[#a0a0a0]" : "flex"}>
            <ToolGroup items={items} first={idx === 0} />
          </div>
        ))}
      </div>
      <div className="flex h-7 border-b border-[#c4c4c4]">
        {secondGroups.map((items, idx) => (
          <ToolGroup key={idx} items={items} first={idx === 0} />
        ))}
      </div>

      <CoordinateBar />
      <RibbonBar />

      <div className="flex flex-1">
        <SideToolbar />
        <OperationsPanel />
        <Viewport />
      </div>

      <Annotations />
    </div>
  );
}
